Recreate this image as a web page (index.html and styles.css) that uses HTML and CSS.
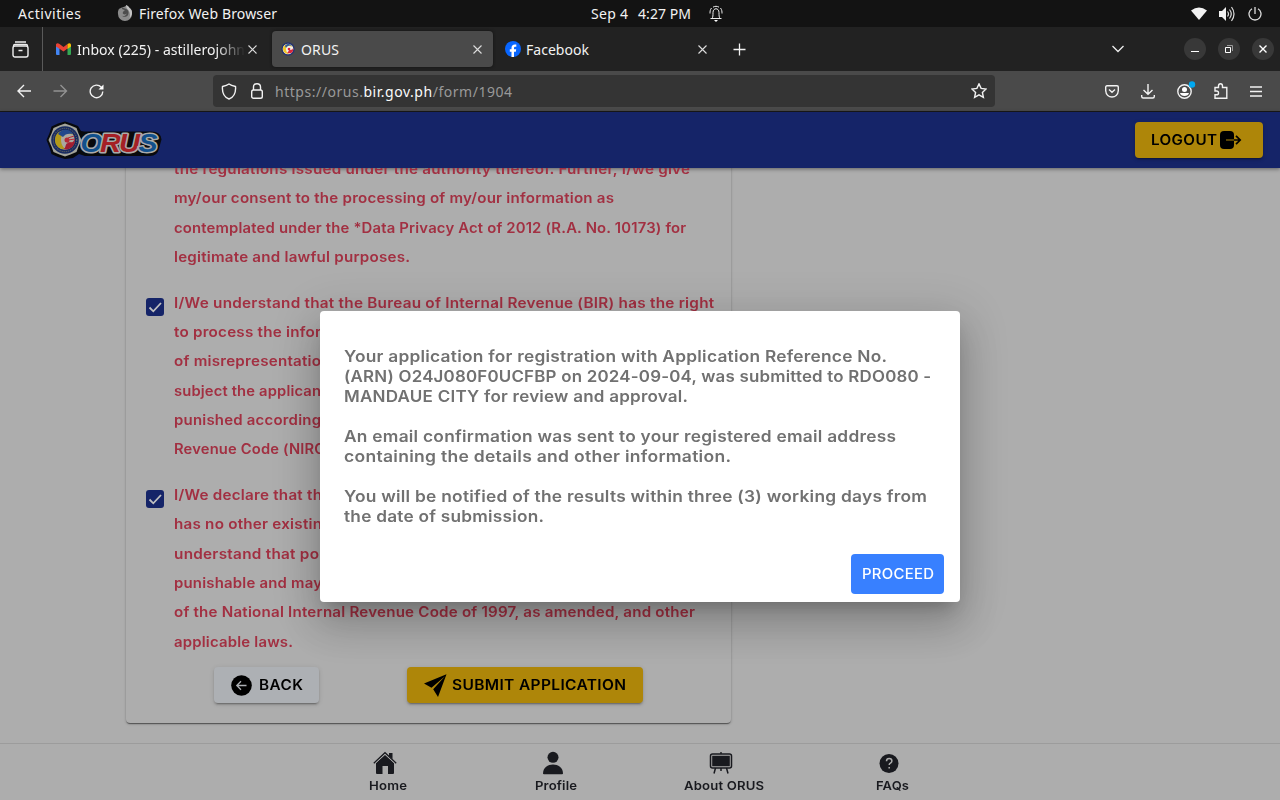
FILE: index.html
```html
<!DOCTYPE html>
<html lang="en">
<head>
<meta charset="utf-8">
<title>ORUS</title>
<link rel="stylesheet" href="styles.css">
</head>
<body>
<div class="system">
  <div class="system-left"><span class="fit" data-w="63">Activities</span>
    <svg class="fox" width="16" height="16" viewBox="0 0 16 16"><path d="M8 1.500C9 .8 9 .5 9.200 0 11 1.200 12 2 12.500 3c2 1.300 2.800 3.300 2.500 6a7 7 0 0 1-14 0C.6 6.500 1.500 4.500 2.500 3v1.200C3.300 3 4 2.700 5 2.500z" fill="#8b8b8b"/><path d="M5 2.500c-.3.8 0 1.500.8 1.900L8 5 6.500 6.200 5.600 8c.5 1.500 2.500 2 4 .5-.2 2-3 3.500-5 2C7 13 12 12 11.500 7 11 4.800 9.500 4 8 3.500z" fill="#4d4d4d"/><path d="M9.200 0C11 1.200 12 2 12.500 3c2 1.300 2.800 3.300 2.500 6-.5 2-1.500 3-2.500 4 1-3 .5-5-.5-7S9 3.500 9.200 0z" fill="#c4c4c4"/></svg>
    <span class="fit" data-w="138">Firefox Web Browser</span></div>
  <div class="clock"><span class="fit" data-w="37">Sep 4</span><span class="fit" data-w="53">4:27 PM</span>
    <svg width="14" height="18" viewBox="0 0 14 18" fill="none" stroke="#eee"><path d="M1.500 13.500h11M3 13.500c1-1.500 1-3 1-6 0-5 6-5 6 0 0 3 0 4.500 1 6M2.500 3C1 5 1 6.500 1 8.500M11.500 3c1.500 2 1.500 3.500 1.500 5.500M4 2.200C6 1 8 1 10 2.200"/><path d="M5 15h4l-2 2z" fill="#fff" stroke="none"/></svg></div>
  <div class="tray">
    <svg width="16" height="14" viewBox="0 0 16 14"><path d="M0 3.500Q8-2.500 16 3.500L8 13z" fill="#f2f2f2"/></svg>
    <svg width="17" height="16" viewBox="0 0 17 16" fill="none" stroke="#ddd"><path d="M0 5h3l4-4v14l-4-4H0z" fill="#f2f2f2" stroke="none"/><path d="M8.500 5.500q2 2.500 0 5M10.500 3.500q3.500 4.500 0 9M12.500 1q5 7 0 14" stroke-width="1.200"/></svg>
    <svg width="14" height="14" viewBox="0 0 14 14" fill="none" stroke="#ddd" stroke-width="1.300"><path d="M4 1.800a6 6 0 1 0 6 0M7 0v7"/></svg>
  </div>
</div>

<div class="tabs">
  <div class="recent"><svg width="17" height="17" viewBox="0 0 17 17" fill="none" stroke="#eee" stroke-width="1.400"><rect x="1" y="5" width="15" height="11" rx="2"/><path d="M3 1h11M1.500 5q0-1.500 1.500-1.500h11q1.500 0 1.500 1.500M6.500 9.500h4"/></svg></div>
  <div class="tab first"><svg class="fav" width="15" height="12" viewBox="0 0 15 12"><path d="M0 1v10q0 1 1 1h2.500V5z" fill="#4285f4"/><path d="M11.500 12H14q1 0 1-1V1l-3.500 3z" fill="#34a853"/><path d="M0 1.500Q1-.8 3.500 1l4 3 4-3v4.500l-4 3L0 3.500z" fill="#ea4335"/><path d="M11.500 1Q14-.8 15 1.500v2l-3.500 2.500z" fill="#fbbc04"/></svg><span class="tab-title fade fit" data-w="168">Inbox (225) - astillerojohn</span><svg class="x" width="9" height="9" viewBox="0 0 9 9"><path d="M.5.5l8 8M8.500.5l-8 8"/></svg></div>
  <div class="tab active"><svg class="fav" width="14" height="14" viewBox="0 0 14 14"><circle cx="7" cy="7" r="6.700" fill="#26336e"/><circle cx="7" cy="7" r="5.300" fill="#f4f0ea"/><path d="M2 7c0-6 8-6 9-2-3-2-6-1-6 2 0 2 1 4 3 5-3 0-6-2-6-5" fill="#f1c628"/><path d="M12 6c1 5-3 6-6 5 2-1 1-3 3-3s3-1 3-2" fill="#d8263c"/><path d="M4 4c2-3 6-2 7 0-3-1-5 0-6 2z" fill="#2b5aa3"/><circle cx="8" cy="7" r="1.300" fill="#d8263c"/></svg><span class="tab-title fit" data-w="38">ORUS</span><svg class="x" width="9" height="9" viewBox="0 0 9 9"><path d="M.5.5l8 8M8.500.5l-8 8"/></svg></div>
  <div class="tab third"><svg class="fav" width="16" height="16" viewBox="0 0 16 16"><circle cx="8" cy="8" r="8" fill="#0866ff"/><path d="M6.500 16v-5.300H4.800V8.200h1.700V7c0-2.900 1.500-4 4.800-3.500v2.200C9.500 5.600 9 5.900 9 7v1.200h2.200l-.4 2.500H9V16z" fill="#fff"/></svg><span class="tab-title fit" data-w="63">Facebook</span><svg class="x" width="9" height="9" viewBox="0 0 9 9"><path d="M.5.5l8 8M8.500.5l-8 8"/></svg></div>
  <svg class="plus" width="13" height="13" viewBox="0 0 13 13"><path d="M6.500.5v12M.5 6.500h12" stroke="#f2f2f2" stroke-width="1.300"/></svg>
  <div class="window-tools">
    <svg class="chev" width="12" height="8" viewBox="0 0 12 8"><path d="M.5 1L6 6.500 11.500 1" fill="none" stroke="#eee" stroke-width="1.300"/></svg>
    <div class="round"><svg width="8" height="8"><path d="M0 6.500h8" stroke="#fff"/></svg></div>
    <div class="round"><svg width="8" height="8" fill="none"><path d="M2 .5h5.500V6" stroke="#999"/><path d="M.5 2.500h5v5h-5z" stroke="#fff"/></svg></div>
    <div class="round"><svg width="8" height="8"><path d="M.5.5l7 7M7.500.5l-7 7" stroke="#fff" stroke-width="1.400"/></svg></div>
  </div>
</div>

<div class="toolbar">
  <div class="nav-buttons">
    <svg width="15" height="14" viewBox="0 0 15 14"><path d="M7 1L1 7l6 6M1 7h13"/></svg>
    <svg class="off" width="15" height="14" viewBox="0 0 15 14"><path d="M7.500 1l6 6-6 6M13.500 7H.5"/></svg>
    <svg width="15" height="15" viewBox="0 0 15 15"><path d="M12.300 3.300A6.300 6.300 0 1 0 13.800 7.500"/><path d="M14.500.5v5h-5z" fill="#fff" stroke="none"/></svg>
  </div>
  <div class="url">
    <svg width="16" height="17" viewBox="0 0 16 17"><path d="M8 1C6 2.500 4 3 1.500 3.500 1 9 3 14 8 16c5-2 7-7 6.500-12.500C12 3 10 2.500 8 1z"/></svg>
    <svg width="12" height="16" viewBox="0 0 12 16"><rect x=".7" y="7" width="10.600" height="8.300" rx="1.800"/><path d="M2.500 7V4q0-3.300 3.500-3.300T9.500 4v3"/></svg>
    <span class="address fit" data-w="237">https://orus.<b>bir.gov.ph</b>/form/1904</span>
    <svg class="star" width="16" height="16" viewBox="0 0 16 16"><path d="M8 .9l2.100 4.500 5 .6-3.700 3.400 1 4.900L8 11.900l-4.400 2.400 1-4.900L.9 6l5-.6z"/></svg>
  </div>
  <div class="tools">
    <svg width="14" height="13" viewBox="0 0 14 13"><path d="M2 .8h10q1.300 0 1.300 1.300v3.500C13 10 10 12 7 12S1 10 .7 5.600V2.100Q.7.800 2 .8zM4 4.500l3 2.700 3-2.700"/></svg>
    <svg width="14" height="15" viewBox="0 0 14 15"><path d="M7 0v10M2.500 6L7 10.300 11.500 6M.7 11v1.500q0 1.500 1.500 1.500h9.600q1.500 0 1.500-1.500V11"/></svg>
    <svg width="15" height="15" viewBox="0 0 15 15" overflow="visible"><circle cx="7.500" cy="7.500" r="6.700"/><circle cx="7.500" cy="5.500" r="2.500" fill="#fff" stroke="none"/><path d="M3 9h9c-.5 4-8.500 4-9 0z" fill="#fff" stroke="none"/><circle cx="15" cy=".5" r="3.200" fill="#00a8f0" stroke="none"/></svg>
    <svg width="14" height="16" viewBox="0 0 14 16"><path d="M1 4.500h3.500V3q0-2.300 2-2.300T8.500 3v1.500h4.300v10.800H1v-3.500h1.500q2 0 2-1.900T2.500 8H1z"/></svg>
    <svg width="12" height="11" viewBox="0 0 12 11"><path d="M0 1h12M0 5.500h12M0 10h12"/></svg>
  </div>
</div>

<header class="site-header">
  <svg class="logo" width="116" height="38" viewBox="0 0 116 38">
    <path d="M19 .5l6.500 2L32 5l3 5 3 .5h67q10 0 10.500 8l-2.500 9q-1.500 7.500-9 7.500H39l-6-2-6 4-8 1-7-2-6.500-3-2-6.500L.5 19l3-7 2-6.500L12 2.500z" fill="#080a0d"/>
    <path d="M19 2.500l5.500 2 6 2.500 2 5.500L35.500 19l-3 6.500-2 5.500-6 2.500-5.500 2-5.500-2-6-2.500-2-5.500L2.500 19l3-6.500L7.500 7l6-2.500z" fill="#a3a49b"/>
    <circle cx="19" cy="19" r="13.800" fill="#172a61"/><circle cx="19" cy="19" r="11.700" fill="none" stroke="#78765c" stroke-dasharray="1 1"/><circle cx="19" cy="19" r="9.800" fill="#aaa8a0"/>
    <path d="M9 19c0-11 14-12 18-5-6-3-12-1-12 4 0 4 1 8 5 10-6 1-11-3-11-9z" fill="#b29918"/><path d="M28.500 17c2 8-5 13-11 11 3-1 1-6 5-6s6-2 6-5z" fill="#a11e31"/><path d="M12 13c4-6 12-5 15 0-5-1-8 0-10 3z" fill="#21488b"/><circle cx="21" cy="19" r="2.500" fill="#b32a35"/><path d="M22 17l6-2M22 19l7-1M21 21l6 1" stroke="#b32a35"/>
    <g class="logo-text"><text x="34.500" y="30.500" textLength="22" lengthAdjust="spacingAndGlyphs" fill="#11508c">O</text><text x="54" y="30.500" textLength="21" lengthAdjust="spacingAndGlyphs" fill="#a52025">R</text><text x="73" y="30.500" textLength="21" lengthAdjust="spacingAndGlyphs" fill="#a52025">U</text><text x="92.500" y="30.500" textLength="19" lengthAdjust="spacingAndGlyphs" fill="#11508c">S</text></g>
  </svg>
  <div class="btn logout"><span class="fit wide" data-w="66">LOGOUT</span><svg width="22" height="18" viewBox="0 0 22 18"><rect x="0" y="0" width="14" height="18" rx="4"/><path d="M6 9h8" stroke="#ae8609" stroke-width="1"/><path d="M14 9h6M16 4.800L20.200 9 16 13.200" fill="none" stroke="#000" stroke-width="1.700"/></svg></div>
</header>

<main class="page">
  <section class="card">
    <div class="clause"><div class="no-box"></div><div>
      <div class="line fit wide" data-w="516">the regulations issued under the authority thereof. Further, I/we give</div>
      <div class="line fit wide" data-w="440">my/our consent to the processing of my/our information as</div>
      <div class="line fit wide" data-w="512">contemplated under the *Data Privacy Act of 2012 (R.A. No. 10173) for</div>
      <div class="line fit wide" data-w="236">legitimate and lawful purposes.</div></div></div>
    <div class="clause"><div class="box"><svg width="18" height="18"><path d="M3.500 9.500l3.800 3.800L15 5"/></svg></div><div>
      <div class="line fit wide" data-w="540">I/We understand that the Bureau of Internal Revenue (BIR) has the right</div>
      <div class="line"><span class="fit wide" data-w="147">to process the infor</span>mation</div>
      <div class="line"><span class="fit wide" data-w="147">of misrepresentatio</span>n</div>
      <div class="line"><span class="fit wide" data-w="147">subject the applican</span>t</div>
      <div class="line"><span class="fit wide" data-w="147">punished according</span></div>
      <div class="line"><span class="fit wide" data-w="151">Revenue Code (NIRC</span>)</div></div></div>
    <div class="clause"><div class="box"><svg width="18" height="18"><path d="M3.500 9.500l3.800 3.800L15 5"/></svg></div><div>
      <div class="line"><span class="fit wide" data-w="148">I/We declare that th</span>e</div>
      <div class="line"><span class="fit wide" data-w="148">has no other existin</span>g</div>
      <div class="line"><span class="fit wide" data-w="145">understand that po</span></div>
      <div class="line"><span class="fit wide" data-w="148">punishable and may</span></div>
      <div class="line fit wide" data-w="521">of the National Internal Revenue Code of 1997, as amended, and other</div>
      <div class="line fit wide" data-w="119">applicable laws.</div></div></div>
    <div class="actions">
      <div class="btn back"><svg width="21" height="21" viewBox="0 0 21 21"><circle cx="10.500" cy="10.500" r="10.300"/><path d="M15.500 10.500H6M10 6.300L5.800 10.500l4.200 4.200" fill="none" stroke="#adb0b4" stroke-width="1.300"/></svg><span class="fit wide" data-w="44">BACK</span></div>
      <div class="btn submit"><svg width="23" height="23" viewBox="0 0 23 23"><path d="M22.500.3L0 9.500l7.500 4.300L21 2.300zM22.500.3L14 23l-4.800-7.700L21 2.300z"/></svg><span class="fit wide" data-w="174">SUBMIT APPLICATION</span></div>
    </div>
  </section>
</main>

<nav class="bottom">
  <div class="item"><svg width="24" height="24" viewBox="0 0 24 24"><path d="M16 2h3.500v6L16 5zM3 12l9-8.200 9 8.200v10q0 1-1 1h-5v-8H9.500v8H4q-1 0-1-1z"/><path d="M.8 12.200L12 1.700l11.200 10.500" fill="none" stroke="#191a1f" stroke-width="1.300"/><path d="M2.500 12.200L12 3.400l9.500 8.800" fill="none" stroke="#adadad" stroke-width=".8"/></svg><span class="fit wide" data-w="38">Home</span></div>
  <div class="item"><svg width="24" height="24" viewBox="0 0 24 24"><circle cx="12" cy="6.300" r="5.500"/><path d="M2 22.500C2 10.500 22 10.500 22 22.500q0 .7-1 .7H3q-1 0-1-.7z"/></svg><span class="fit wide" data-w="42">Profile</span></div>
  <div class="item"><svg width="24" height="24" viewBox="0 0 24 24"><rect x="1.500" y="3" width="21" height="14" rx="2" fill="none" stroke="#191a1f" stroke-width="1.500"/><path d="M3.200 4.700h17.600v10.600H3.200zM11.300 1h1.400v2h-1.400z"/><path d="M6.500 17L5 22.500M17.500 17l1.500 5.500M12 17v3" fill="none" stroke="#191a1f" stroke-width="1.500"/></svg><span class="fit wide" data-w="80">About ORUS</span></div>
  <div class="item"><svg width="24" height="24" viewBox="0 0 24 24"><circle cx="12" cy="12.500" r="9.500"/><path d="M9.500 10.200q0-2.700 2.700-2.700t2.700 2.400q0 1.300-1.500 2.200-1.200.7-1.200 2M12.200 16v1.500" fill="none" stroke="#adadad" stroke-width="1.500"/></svg><span class="fit wide" data-w="33">FAQs</span></div>
</nav>

<div class="dialog" role="dialog">
  <div class="message">
    <p><span class="fit wide" data-w="543">Your application for registration with Application Reference No.</span><span class="fit wide" data-w="587">(ARN) O24J080F0UCFBP on 2024-09-04, was submitted to RDO080 -</span><span class="fit wide" data-w="344">MANDAUE CITY for review and approval.</span></p>
    <p><span class="fit wide" data-w="552">An email confirmation was sent to your registered email address</span><span class="fit wide" data-w="387">containing the details and other information.</span></p>
    <p><span class="fit wide" data-w="583">You will be notified of the results within three (3) working days from</span><span class="fit wide" data-w="200">the date of submission.</span></p>
  </div>
  <div class="dialog-actions"><div class="proceed"><span class="fit wide" data-w="72">PROCEED</span></div></div>
</div>
<script src="fit.js"></script>
</body>
</html>
```
FILE: styles.css
```css
* { box-sizing: border-box; }
body { margin: 0; width: 1280px; height: 800px; overflow: hidden; position: relative; display: flex; flex-direction: column; background: #adadad; font-family: Inter, "Open Sans", sans-serif; }
svg { display: block; flex: none; }
.fit { white-space: nowrap; width: max-content; flex: none; }
.wide { display: inline-block; transform-origin: 0 50%; }
.system, .tabs, .toolbar { font-family: "Noto Sans", "Open Sans", sans-serif; font-size: 14px; color: #f2f2f2; flex: none; }
.system { height: 27px; background: #131313; display: grid; grid-template-columns: 1fr auto 1fr; align-items: center; }
.system-left { display: flex; align-items: center; padding-left: 18px; }
.fox { margin: 0 6px 2px 36px; }
.clock { display: flex; align-items: center; gap: 10px; padding-left: 34px; }
.clock svg { margin-left: 8px; }
.tray { display: flex; justify-content: flex-end; align-items: center; gap: 12px; padding-right: 18px; }

.tabs { height: 44px; background: #222; display: flex; align-items: center; }
.recent { width: 43px; height: 44px; border-right: 1px solid #5a5a5a; padding: 14px 0 0 12px; }
.tab { height: 36px; display: flex; align-items: center; border-radius: 4px; }
.first { width: 229px; padding: 0 15px 0 13px; }
.active { width: 221px; background: #4a4a4a; padding: 0 11px 0 9px; box-shadow: 0 0 3px #111; }
.third { width: 229px; padding: 0 15px 0 12px; }
.fav { margin-right: 6px; }
.third .fav { margin-right: 5px; }
.fade { -webkit-mask-image: linear-gradient(90deg, #000 83%, transparent 100%); mask-image: linear-gradient(90deg, #000 83%, transparent 100%); }
.x { margin-left: auto; fill: none; stroke: #ddd; stroke-width: 1.1; }
.plus { margin-left: 11px; }
.window-tools { margin-left: auto; display: flex; align-items: center; gap: 12px; padding-right: 6px; }
.chev { margin-right: 48px; }
.round { width: 22px; height: 22px; border-radius: 50%; background: #383838; display: grid; place-items: center; }

.toolbar { height: 41px; background: #4a4a4a; border-bottom: 1px solid #191919; display: flex; align-items: center; }
.toolbar svg { fill: none; stroke: #f2f2f2; stroke-width: 1.4; }
.nav-buttons { display: flex; align-items: center; gap: 21px; padding-left: 17px; width: 213px; }
.toolbar .off { stroke: #929292; }
.url { width: 782px; height: 32px; background: #343434; border-radius: 4px; display: flex; align-items: center; padding: 0 8px; }
.url svg:nth-child(2) { margin: 0 12px 0 14px; }
.address { color: #999; }
.address b { font-weight: 400; color: #fbfbfb; }
.star { margin-left: auto; }
.tools { margin-left: auto; display: flex; align-items: center; gap: 22px; padding-right: 18px; }

.site-header { height: 56px; flex: none; background: #152468; display: flex; align-items: center; justify-content: space-between; padding: 0 17px 0 46px; position: relative; box-shadow: 0 1px 4px rgba(0,0,0,.45); }
.logo-text { font: italic 900 25px "Liberation Sans", sans-serif; stroke: #aaa; stroke-width: 3px; paint-order: stroke; stroke-linejoin: round; }
.btn { height: 36px; border-radius: 4px; display: flex; align-items: center; font-size: 13.8px; font-weight: 600; color: #000; background: #ae8609; box-shadow: 0 3px 1px -2px rgba(0,0,0,.2), 0 2px 2px rgba(0,0,0,.14), 0 1px 5px rgba(0,0,0,.12); }
.logout { width: 128px; padding-left: 16px; gap: 3px; }

.page { flex: 1; min-height: 0; overflow: hidden; display: flex; flex-direction: column; justify-content: flex-end; padding: 0 0 20px 126px; }
.card { width: 605px; flex: none; border-radius: 4px; padding: 0 16px 20px 20px; box-shadow: 0 2px 1px -1px rgba(0,0,0,.3), 0 1px 1px rgba(0,0,0,.2), 0 1px 3px rgba(0,0,0,.2); }
.clause { display: flex; gap: 10px; margin-bottom: 16px; }
.box, .no-box { width: 18px; height: 18px; flex: none; margin-top: 9.4px; }
.box { background: #152468; border-radius: 3px; }
.box path { fill: none; stroke: #c0c0c0; stroke-width: 1.8; }
.line { display: block; height: 29.4px; font-size: 13.8px; font-weight: 600; line-height: 29.4px; color: #a23042; white-space: nowrap; letter-spacing: .2px; }
.actions { display: flex; padding-left: 68px; margin-top: -6.2px; }
.back { width: 105px; background: #adb0b4; padding-left: 17px; gap: 7px; }
.submit { width: 236px; margin-left: 88px; padding-left: 17px; gap: 5px; }

.bottom { height: 57px; flex: none; border-top: 1px solid #9c9c9c; display: flex; justify-content: center; padding-top: 7px; }
.item { width: 168px; display: flex; flex-direction: column; align-items: center; color: #191a1f; font-size: 12.4px; font-weight: 600; line-height: 18px; gap: 2px; }
.item svg { fill: #191a1f; margin-right: 6px; }

.dialog { position: absolute; left: 320px; top: 311px; width: 640px; height: 291px; background: #fff; border-radius: 4px; display: flex; flex-direction: column; justify-content: space-between; padding: 36px 16px 8px 24px; box-shadow: 0 11px 15px -7px rgba(0,0,0,.2), 0 24px 38px 3px rgba(0,0,0,.14), 0 9px 46px 8px rgba(0,0,0,.12); }
.message { height: 200px; color: #717171; font-size: 15.8px; font-weight: 600; line-height: 20px; }
.message p { margin: 0 0 20px; }
.message span { display: block; }
.dialog-actions { display: flex; justify-content: flex-end; }
.proceed { width: 93px; height: 40px; border-radius: 4px; background: #3880ff; color: #fff; display: grid; place-items: center; font-size: 13.8px; font-weight: 500; }
```
FILE: fit.js
```js
// Track each text run so that it spans its design width.
// Runs marked "wide" take most of the difference in glyph width.
document.querySelectorAll('.fit').forEach(function (el) {
  el.style.letterSpacing = '0px';
  var target = parseFloat(el.dataset.w);
  var natural = el.getBoundingClientRect().width;
  var scale = 1;
  if (el.classList.contains('wide')) {
    scale = 1 + (target / natural - 1) * 0.75;
    el.style.transform = 'scaleX(' + scale + ')';
  }
  var spacing = (target / scale - natural) / (el.textContent.length - 1);
  el.style.letterSpacing = spacing + 'px';
  el.style.marginRight = (target - target / scale - spacing) + 'px';
});
```
